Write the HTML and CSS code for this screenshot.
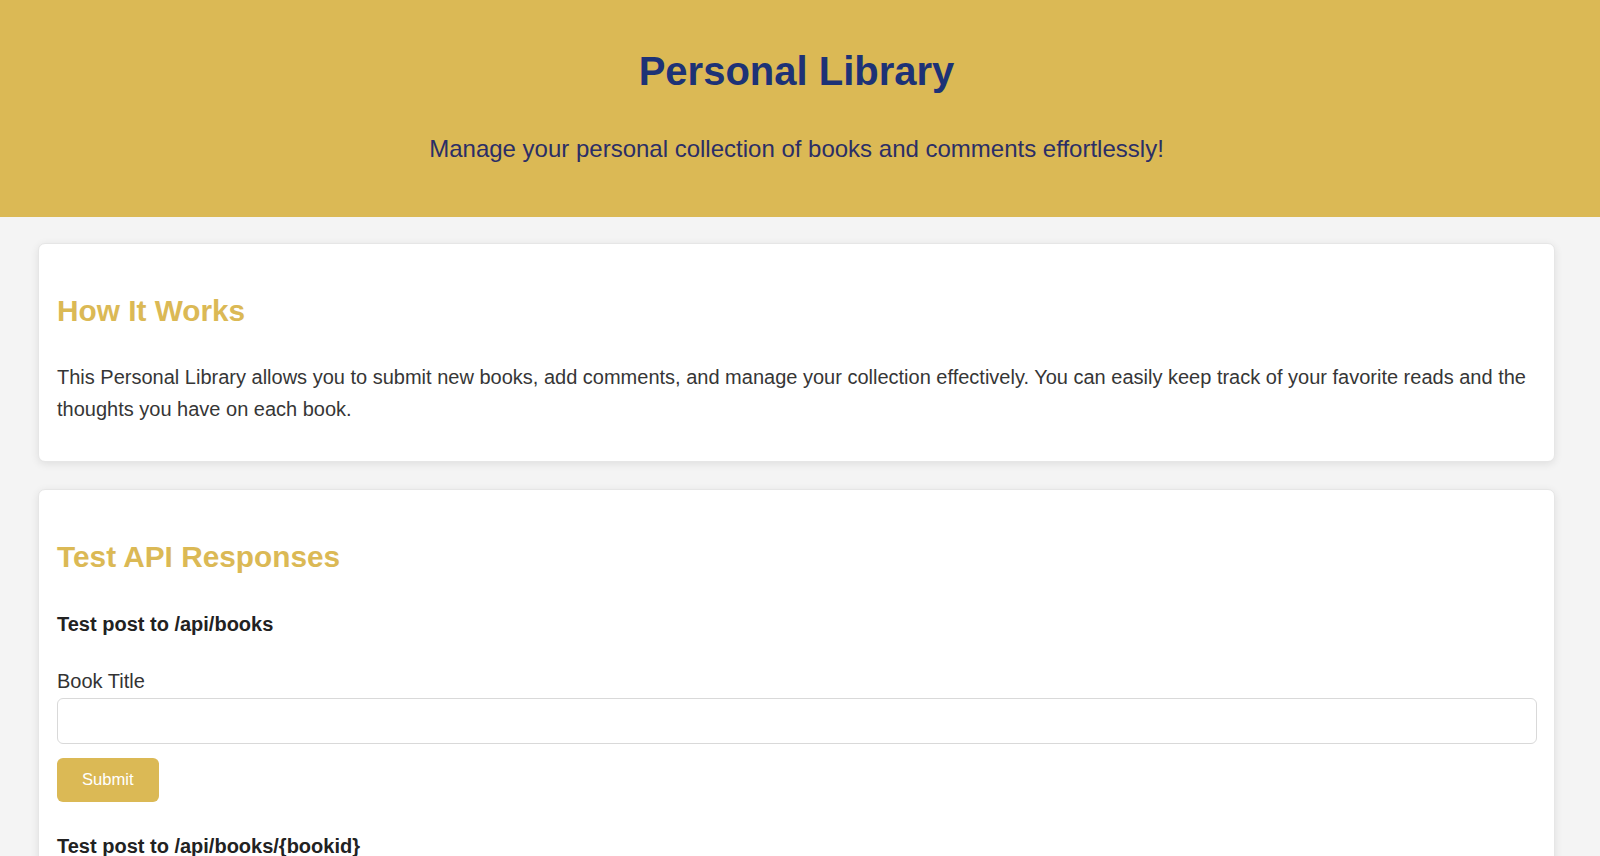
FILE: index.html
```html
<!DOCTYPE html>
<html lang="en">
<head>
<meta charset="utf-8">
<title>Personal Library</title>
<link rel="stylesheet" href="styles.css">
</head>
<body>
<header class="site-header">
  <h1 class="site-title">Personal Library</h1>
  <p class="site-tagline">Manage your personal collection of books and comments effortlessly!</p>
</header>
<main class="content">
  <section class="card">
    <h2 class="card-title">How It Works</h2>
    <p class="card-text">This Personal Library allows you to submit new books, add comments, and manage your collection effectively. You can easily keep track of your favorite reads and the thoughts you have on each book.</p>
  </section>
  <section class="card">
    <h2 class="card-title">Test API Responses</h2>
    <h4 class="form-title">Test post to /api/books</h4>
    <form class="test-form">
      <label class="field-label" for="bookTitle">Book Title</label>
      <input class="field-input" type="text" id="bookTitle" name="title">
      <button class="btn" type="button">Submit</button>
    </form>
    <h4 class="form-title">Test post to /api/books/{bookid}</h4>
    <form class="test-form">
      <label class="field-label" for="idInputComment">Book ID</label>
      <input class="field-input" type="text" id="idInputComment" name="id">
      <label class="field-label" for="bookComment">Comment</label>
      <input class="field-input" type="text" id="bookComment" name="comment">
      <button class="btn" type="button">Submit</button>
    </form>
  </section>
</main>
</body>
</html>
```
FILE: styles.css
```css
html, body {
  margin: 0;
  padding: 0;
}

body {
  background: #f4f4f4;
  font-family: "Liberation Sans", Arial, sans-serif;
  font-size: 20px;
  line-height: 31.6px;
  color: #363636;
}

.site-header {
  background: #dbb955;
  text-align: center;
  padding: 40px 27px 49px 20px;
}

.site-title {
  margin: 0 0 27px;
  font-size: 40px;
  font-weight: bold;
  line-height: 63px;
  color: #1d3276;
}

.site-tagline {
  margin: 0;
  font-size: 24px;
  line-height: 38px;
  color: #2b2e66;
}

.content {
  padding: 26px 45px 40px 38px;
  display: flex;
  flex-direction: column;
  gap: 27px;
}

.card {
  background: #fff;
  border: 1px solid #e6e6e6;
  border-radius: 7px;
  box-shadow: 0 2px 8px rgba(0, 0, 0, 0.09);
  padding: 18px 17px 18px 18px;
}

.card-title {
  margin: 25px 0 28px;
  font-size: 29.8px;
  font-weight: bold;
  line-height: 47px;
  color: #dbb955;
}

.card-text {
  margin: 0 0 18px;
}

.form-title {
  margin: 29px 0 25px;
  font-size: 20px;
  font-weight: bold;
  color: #222;
}

.test-form {
  display: flex;
  flex-direction: column;
  align-items: flex-start;
}

.field-label {
  display: block;
  margin-bottom: 1px;
  color: #333;
}

.field-input {
  box-sizing: border-box;
  width: 100%;
  height: 46px;
  padding: 12px;
  border: 1px solid #d9d9d9;
  border-radius: 6px;
  background: #fff;
  font-family: inherit;
  font-size: 16.4px;
}

.btn {
  margin-top: 14px;
  padding: 12px 25px;
  border: none;
  border-radius: 6px;
  background: #dbb955;
  color: #fff;
  font-family: "Liberation Sans", Arial, sans-serif;
  font-size: 16.6px;
  line-height: 20px;
  cursor: pointer;
}
```
